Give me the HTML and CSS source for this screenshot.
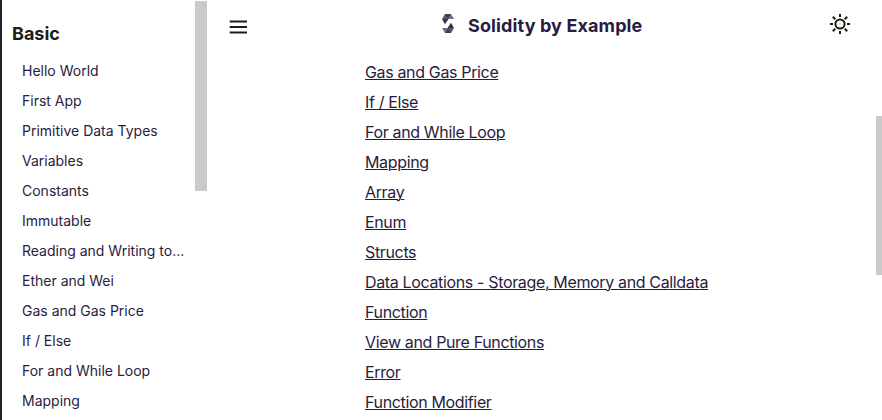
FILE: index.html
```html
<!DOCTYPE html>
<html lang="en">
<head>
<meta charset="utf-8">
<title>Solidity by Example</title>
<link rel="stylesheet" href="styles.css">
</head>
<body>
<div class="app">
  <aside class="sidebar">
    <nav class="menu">
      <h3 class="menu-title">Basic</h3>
      <ul class="menu-list">
        <li><a>Hello World</a></li>
        <li><a>First App</a></li>
        <li><a>Primitive Data Types</a></li>
        <li><a>Variables</a></li>
        <li><a>Constants</a></li>
        <li><a>Immutable</a></li>
        <li><a>Reading and Writing to...</a></li>
        <li><a>Ether and Wei</a></li>
        <li><a>Gas and Gas Price</a></li>
        <li><a>If / Else</a></li>
        <li><a>For and While Loop</a></li>
        <li><a>Mapping</a></li>
      </ul>
    </nav>
    <div class="side-thumb"></div>
  </aside>
  <div class="page">
    <header class="header">
      <svg class="burger" viewBox="0 0 18 14"><path d="M.7 1.5H18M.7 7H18M.7 12.5H18"/></svg>
      <div class="brand">
        <svg class="logo" viewBox="0 0 12 19">
          <path fill="#5d536f" d="M3 0h6L6 5H0z"/>
          <path fill="#75698a" d="M9 0l3 5H6z"/>
          <path fill="#43365a" d="M3 0h6L6 5z"/>
          <path fill="#3a2d4e" d="M0 5h6.5L3 10.2z"/>
          <path fill="#5d536f" d="M9 19H3l3-5h6z"/>
          <path fill="#75698a" d="M3 19l-3-5h6z"/>
          <path fill="#43365a" d="M9 19H3l3-5z"/>
          <path fill="#3a2d4e" d="M12 14H5.5L9 8.8z"/>
        </svg>
        <h1 class="title">Solidity by Example</h1>
      </div>
      <svg class="sun" viewBox="-10 -10 20 20"><circle r="4.6"/><path d="M0-10v3M0 7v3M-10 0h3M7 0h3M-7.2-7.2l2.5 2.5M4.7 4.7l2.5 2.5M7.2-7.2L4.7-4.7M-4.7 4.7l-2.5 2.5"/></svg>
    </header>
    <ul class="toc">
      <li><a>Gas and Gas Price</a></li>
      <li><a>If / Else</a></li>
      <li><a>For and While Loop</a></li>
      <li><a>Mapping</a></li>
      <li><a>Array</a></li>
      <li><a>Enum</a></li>
      <li><a>Structs</a></li>
      <li><a>Data Locations - Storage, Memory and Calldata</a></li>
      <li><a>Function</a></li>
      <li><a>View and Pure Functions</a></li>
      <li><a>Error</a></li>
      <li><a>Function Modifier</a></li>
    </ul>
  </div>
  <div class="page-thumb"></div>
</div>
</body>
</html>
```

FILE: styles.css
```css
* { box-sizing: border-box; }
body {
  margin: 0;
  background: #fff;
  color: #2a1c40;
  font-family: Inter, "Liberation Sans", sans-serif;
}
ul { list-style: none; margin: 0; padding: 0; }
li { height: 30px; line-height: 30px; white-space: nowrap; }
.app { display: flex; height: 420px; overflow: hidden; }
.sidebar {
  display: flex;
  justify-content: space-between;
  width: 207px;
  border-left: 2px solid #222126;
}
.menu { padding: 23px 0 0 10px; }
.menu-title {
  margin: 0 0 11px;
  color: #1e1e14;
  font-size: 18px;
  line-height: 22px;
  font-weight: 700;
}
.menu-list { padding-left: 10px; font-size: 14px; }
.side-thumb { width: 12px; height: 190px; margin-top: 1px; background: #cacaca; }
.page { flex: 1; }
.header {
  display: flex;
  height: 57px;
  padding: 0 26px 0 22px;
}
.burger { width: 18px; height: 14px; margin-top: 20px; fill: none; stroke: #1e1e14; stroke-width: 2; }
.brand { display: flex; margin-left: 195px; }
.logo { width: 12px; height: 19px; margin: 14px 14px 0 0; }
.title { margin: 13px 0 0; font-size: 18px; line-height: 26px; font-weight: 700; letter-spacing: 0.12px; white-space: nowrap; }
.sun { width: 20px; height: 20px; margin: 14px 0 0 auto; fill: none; stroke: #1e1e14; stroke-width: 2; }
.toc { padding-left: 158px; font-size: 16px; letter-spacing: -0.35px; }
.toc a { text-decoration: underline; text-decoration-thickness: 1px; text-underline-offset: 1px; }
.page-thumb { width: 6px; height: 159px; margin-top: 116px; background: #cacaca; }
```
